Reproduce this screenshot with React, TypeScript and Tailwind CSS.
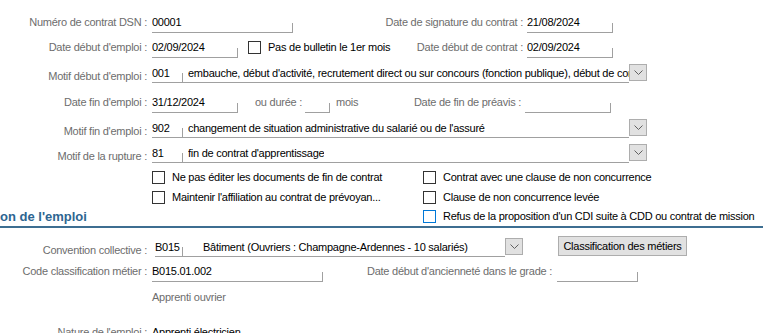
import React from "react"

function Field({ value, w, className = "" }: { value?: string; w: string; className?: string }) {
    return (
        <div className={`flex h-[20px] items-end border-b border-[#a0a0a0] ${w} ${className}`}>
            <span className="flex-1 self-center overflow-hidden whitespace-nowrap pt-[1px] text-black">{value}</span>
            <span className="h-[9px] w-0 border-r border-[#a0a0a0]" />
        </div>
    )
}

function Label({ children, w }: { children: React.ReactNode; w: string }) {
    return <div className={`${w} shrink-0 whitespace-nowrap text-right text-[#6d6d6d]`}>{children}</div>
}

function Checkbox({ blue = false }: { blue?: boolean }) {
    return (
        <span
            className={cn(
                "inline-block h-[13px] w-[13px] shrink-0 border bg-white",
                blue ? "border-[#0078d7]" : "border-[#333333]"
            )}
        />
    )
}

function cn(...c: string[]) {
    return c.filter(Boolean).join(" ")
}

function DropButton() {
    return (
        <div className="flex h-[17px] w-[18px] shrink-0 items-center justify-center border border-[#adadad] bg-[#e1e1e1]">
            <svg width="9" height="5" viewBox="0 0 9 5">
                <path d="M0.5 0.5 L4.5 4.5 L8.5 0.5" fill="none" stroke="#606060" strokeWidth="1" />
            </svg>
        </div>
    )
}

function Combo({ code, text, w }: { code: string; text: string; w: string }) {
    return (
        <div className="ml-[5px] flex items-end">
            <Field value={code} w="w-[31px]" />
            <div className={`flex h-[20px] items-center border-b border-[#a0a0a0] pl-[5px] ${w}`}>
                <span className="overflow-hidden whitespace-nowrap pt-[1px] text-black">{text}</span>
            </div>
            <div className="mb-[2px]">
                <DropButton />
            </div>
        </div>
    )
}

export default function App() {
    return (
        <div
            className="h-[333px] w-[763px] overflow-hidden bg-white pt-[10px] text-[11px] leading-[13px] tracking-[-0.25px]"
            style={{ fontFamily: '"Liberation Sans", Arial, sans-serif' }}
        >
            {/* contrat */}
            <div className="flex h-[25px] items-center">
                <Label w="w-[147px]">Numéro de contrat DSN :</Label>
                <Field value="00001" w="w-[141px]" className="ml-[5px]" />
                <Label w="w-[230px]">Date de signature du contrat :</Label>
                <Field value="21/08/2024" w="w-[86px]" className="ml-[4px]" />
            </div>

            <div className="flex h-[25px] items-center">
                <Label w="w-[147px]">Date début d'emploi :</Label>
                <Field value="02/09/2024" w="w-[86px]" className="ml-[5px]" />
                <div className="ml-[10px] flex w-[275px] items-center">
                    <Checkbox />
                    <span className="ml-[7px] text-black">Pas de bulletin le 1er mois</span>
                    <span className="ml-auto text-[#6d6d6d]">Date début de contrat :</span>
                </div>
                <Field value="02/09/2024" w="w-[86px]" className="ml-[4px]" />
            </div>

            <div className="flex h-[25px] items-end pb-[2px]">
                <Label w="w-[147px]">Motif début d'emploi :</Label>
                <Combo
                    code="001"
                    w="w-[446px]"
                    text="embauche, début d'activité, recrutement direct ou sur concours (fonction publique), début de contrat"
                />
            </div>

            {/* fin */}
            <div className="mt-[5px] flex h-[25px] items-center">
                <Label w="w-[147px]">Date fin d'emploi :</Label>
                <Field value="31/12/2024" w="w-[86px]" className="ml-[5px]" />
                <span className="ml-[17px] w-[50px] text-[#6d6d6d]">ou durée :</span>
                <Field w="w-[25px]" />
                <span className="ml-[6px] w-[22px] text-[#6d6d6d]">mois</span>
                <Label w="w-[163px]">Date de fin de préavis :</Label>
                <Field w="w-[86px]" className="ml-[4px]" />
            </div>

            <div className="flex h-[25px] items-end pb-[2px]">
                <Label w="w-[147px]">Motif fin d'emploi :</Label>
                <Combo
                    code="902"
                    w="w-[446px]"
                    text="changement de situation administrative du salarié ou de l'assuré"
                />
            </div>

            <div className="flex h-[25px] items-end pb-[2px]">
                <Label w="w-[147px]">Motif de la rupture :</Label>
                <Combo code="81" w="w-[446px]" text="fin de contrat d'apprentissage" />
            </div>

            {/* options */}
            <div className="mt-[2px] flex h-[20px] items-center">
                <div className="ml-[152px] flex w-[271px] items-center">
                    <Checkbox />
                    <span className="ml-[7px]">Ne pas éditer les documents de fin de contrat</span>
                </div>
                <Checkbox />
                <span className="ml-[7px]">Contrat avec une clause de non concurrence</span>
            </div>

            <div className="flex h-[20px] items-center">
                <div className="ml-[152px] flex w-[271px] items-center">
                    <Checkbox />
                    <span className="ml-[7px]">Maintenir l'affiliation au contrat de prévoyan...</span>
                </div>
                <Checkbox />
                <span className="ml-[7px]">Clause de non concurrence levée</span>
            </div>

            <div className="flex h-[21px] items-center border-b-2 border-[#3d6e91]">
                <div className="w-[423px] text-[13px] font-bold tracking-normal text-[#2d6591]">on de l'emploi</div>
                <Checkbox blue />
                <span className="ml-[7px] whitespace-nowrap">Refus de la proposition d'un CDI suite à CDD ou contrat de mission</span>
            </div>

            {/* emploi */}
            <div className="mt-[6px] flex h-[25px] items-end pb-[2px]">
                <Label w="w-[147px]">Convention collective :</Label>
                <div className="ml-[8px] flex items-end">
                    <Field value="B015" w="w-[28px]" />
                    <div className="flex h-[20px] w-[322px] items-center border-b border-[#a0a0a0] pl-[20px]">
                        <span className="whitespace-nowrap pt-[1px]">Bâtiment (Ouvriers : Champagne-Ardennes - 10 salariés)</span>
                    </div>
                    <div className="mb-[2px]">
                        <DropButton />
                    </div>
                </div>
                <button className="mb-[1px] ml-[35px] h-[20px] w-[129px] border border-[#adadad] bg-[#e1e1e1] text-black">
                    Classification des métiers
                </button>
            </div>

            <div className="flex h-[25px] items-center">
                <Label w="w-[147px]">Code classification métier :</Label>
                <Field value="B015.01.002" w="w-[171px]" className="ml-[5px]" />
                <Label w="w-[229px]">Date début d'ancienneté dans le grade :</Label>
                <Field w="w-[81px]" className="ml-[5px]" />
            </div>

            <div className="flex h-[27px] items-center">
                <span className="ml-[152px] text-[#6d6d6d]">Apprenti ouvrier</span>
            </div>

            <div className="mt-[9px] flex h-[25px] items-center">
                <Label w="w-[147px]">Nature de l'emploi :</Label>
                <span className="ml-[5px]">Apprenti électricien</span>
            </div>
        </div>
    )
}
